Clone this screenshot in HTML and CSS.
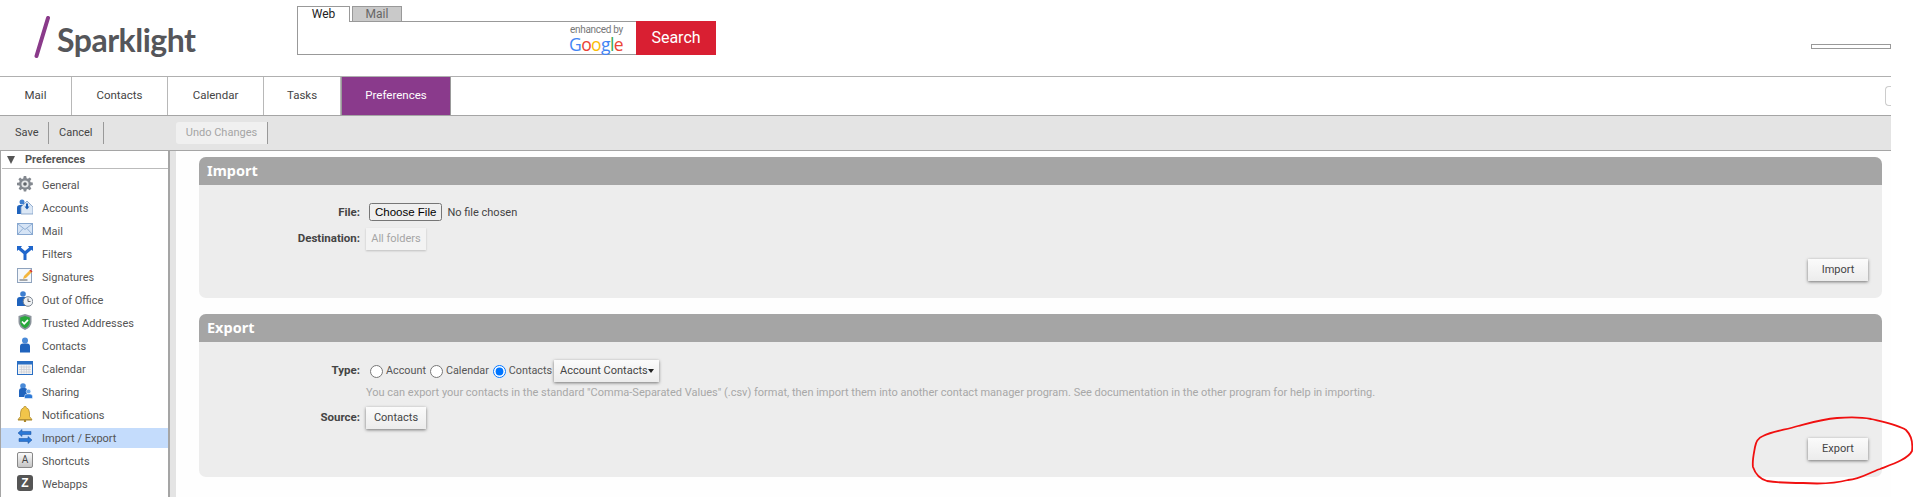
FILE: index.html
```html
<!DOCTYPE html>
<html lang="en">
    <head>
        <meta charset="UTF-8">
        <title>Sparklight Mail - Preferences</title>
        <link rel="stylesheet" href="styles.css">
    </head>
    <body>
        <div class="page">
            <div class="header">
                <div class="logo">
                    <svg class="logo-slash" width="16" height="42" viewBox="0 0 16 42">
                        <path d="M14 2 L2.5 40" stroke="#8a3a8a" stroke-width="4" stroke-linecap="round"/>
                    </svg>
                    <span class="logo-text">Sparklight</span>
                </div>
                <div class="search">
                    <div class="search-tabs">
                        <span class="search-tab on">Web</span>
                        <span class="search-tab">Mail</span>
                    </div>
                    <div class="search-box">
                        <div class="search-field">
                            <div class="enhanced">
                                <span class="enhanced-by">enhanced by</span>
                                <span class="google"><b class="g-blue">G</b><b class="g-red">o</b><b class="g-yellow">o</b><b class="g-blue">g</b><b class="g-green">l</b><b class="g-red">e</b></span>
                            </div>
                        </div>
                        <div class="search-btn">Search</div>
                    </div>
                </div>
                <div class="acct-bar"></div>
            </div>

            <div class="tabs">
                <a class="tab tab-mail">Mail</a>
                <a class="tab tab-contacts">Contacts</a>
                <a class="tab tab-calendar">Calendar</a>
                <a class="tab tab-tasks">Tasks</a>
                <a class="tab tab-prefs">Preferences</a>
                <div class="tab-stub"></div>
            </div>

            <div class="toolbar">
                <a class="tool tool-save">Save</a>
                <a class="tool tool-cancel">Cancel</a>
                <a class="tool tool-undo">Undo Changes</a>
            </div>

            <div class="main">
                <div class="sidebar">
                    <div class="side-head"><span class="side-arrow"></span>Preferences</div>
                    <ul class="side-list">
                        <li>
                            <svg class="ico" viewBox="0 0 16 16"><path d="M6.8 0h2.400l.4 2.200 1.300.5L12.700 1.400l1.700 1.700-1.300 1.800.5 1.300 2.200.4v2.400l-2.200.4-.5 1.300 1.300 1.800-1.700 1.700-1.800-1.300-1.300.5-.4 2.200H6.800l-.4-2.200-1.300-.5-1.800 1.300-1.700-1.700 1.300-1.800-.5-1.300L0 9.200V6.800l2.200-.4.5-1.300-1.300-1.800 1.700-1.700 1.800 1.300 1.300-.5z" fill="#83888f"/><circle cx="8" cy="8" r="3.600" fill="#e6e8ea"/><circle cx="8" cy="8" r="1.800" fill="#5f646a"/></svg>
                            General
                        </li>
                        <li>
                            <svg class="ico" viewBox="0 0 16 16"><circle cx="5" cy="3" r="2.500" fill="#3f7fd0"/><path d="M0 15V8.500Q0 6 3 6h4v9z" fill="#1f63bd"/><path d="M4 8 10 2l6 6v7H4z" fill="#dbe7f5" stroke="#7c9cc4" stroke-width=".8"/><path d="M9 4.500h2v3h1.500L10 10.500 7.500 7.500H9z" fill="#1a5db5"/></svg>
                            Accounts
                        </li>
                        <li>
                            <svg class="ico" viewBox="0 0 16 16"><rect x=".5" y="1.500" width="15" height="11" fill="#d6e4f5" stroke="#88a8d0"/><path d="M1 2l7 5.500L15 2M1 12l5-5.500M15 12l-5-5.500" fill="none" stroke="#88a8d0" stroke-width=".9"/></svg>
                            Mail
                        </li>
                        <li>
                            <svg class="ico" viewBox="0 0 16 16"><path d="M0 1h5L3.800 2.500 8 6l4.200-3.500L11 1h5v5l-1.500-1.300L9.500 9v6h-3V9L1.500 4.700 0 6z" fill="#1f66cc"/></svg>
                            Filters
                        </li>
                        <li>
                            <svg class="ico" viewBox="0 0 16 16"><rect x=".5" y=".5" width="14" height="14" fill="#f4f7fb" stroke="#8fa3bd"/><path d="M2.500 12h8" stroke="#333" stroke-width=".8"/><path d="M6 11l1-3 6-6 2 2-6 6z" fill="#f3b53c"/><path d="M12.500 2.500 13.500 1.500 15.500 3.500 14.500 4.500z" fill="#d8322c"/></svg>
                            Signatures
                        </li>
                        <li>
                            <svg class="ico" viewBox="0 0 16 16"><circle cx="6" cy="3" r="2.800" fill="#3f7fd0"/><path d="M0 15V9q0-3 3-3h6v9z" fill="#1f63bd"/><circle cx="11" cy="10.500" r="4.800" fill="#eef1f4" stroke="#7b8490"/><path d="M11 7.500v3h2.500" fill="none" stroke="#555" stroke-width=".9"/></svg>
                            Out of Office
                        </li>
                        <li>
                            <svg class="ico" viewBox="0 0 16 16"><path d="M8 0l6.500 2v6q0 5-6.500 8Q1.500 13 1.500 8V2z" fill="#8b949c"/><path d="M8 2l4.800 1.400v4.600q0 3.800-4.800 6.200Q3.200 11.800 3.200 8V3.400z" fill="#27a83a"/><path d="M5 7.500l2.200 2.300L11 5.800" fill="none" stroke="#fff" stroke-width="1.700"/></svg>
                            Trusted Addresses
                        </li>
                        <li>
                            <svg class="ico" viewBox="0 0 16 16"><circle cx="8" cy="3.500" r="3" fill="#4a8ad8"/><path d="M3 15.500V9.500Q3 6.500 6 6.500h4q3 0 3 3v6z" fill="#1f63bd"/></svg>
                            Contacts
                        </li>
                        <li>
                            <svg class="ico" viewBox="0 0 16 16"><rect x=".5" y="1.500" width="15" height="13" fill="#f2f2f2" stroke="#2a6fc4"/><rect x="0" y="1" width="16" height="3.500" fill="#2a6fc4"/><path d="M2 7h12M2 9.500h12M2 12h12M4.500 5.500v8M7 5.500v8M9.500 5.500v8M12 5.500v8" stroke="#c8ccd2" stroke-width=".7"/></svg>
                            Calendar
                        </li>
                        <li>
                            <svg class="ico" viewBox="0 0 16 16"><circle cx="6" cy="3" r="2.800" fill="#4a8ad8"/><path d="M2 14V8q0-3 3-3h3q2 0 2 2v7z" fill="#1f63bd"/><circle cx="11.500" cy="8.500" r="2.300" fill="#6aa6e8" stroke="#fff" stroke-width=".5"/><path d="M7.500 15.500v-2q0-2.500 2.500-2.500h3q2.500 0 2.500 2.500v2z" fill="#2b78d6" stroke="#fff" stroke-width=".5"/></svg>
                            Sharing
                        </li>
                        <li>
                            <svg class="ico" viewBox="0 0 16 16"><path d="M8 0q1 0 1 1.400Q12.500 2.500 12.500 7v3.500L15 13.500H1L3.500 10.500V7Q3.500 2.500 7 1.400 7 0 8 0z" fill="#f1c54a" stroke="#a98424" stroke-width=".7"/><path d="M1 13.500h14v1H1z" fill="#a98424"/><circle cx="8" cy="15" r="1.200" fill="#a98424"/></svg>
                            Notifications
                        </li>
                        <li class="on">
                            <svg class="ico" viewBox="0 0 16 16"><path d="M1 4l4-3.500v2h9v3H5v2z" fill="#2b78d6" stroke="#164f9c" stroke-width=".5"/><path d="M15 11l-4 3.500v-2H2v-3h9v-2z" fill="#2b78d6" stroke="#164f9c" stroke-width=".5"/></svg>
                            Import / Export
                        </li>
                        <li>
                            <span class="ico key-ico">A</span>
                            Shortcuts
                        </li>
                        <li>
                            <span class="ico z-ico">Z</span>
                            Webapps
                        </li>
                    </ul>
                </div>

                <div class="content">
                    <div class="panel">
                        <div class="panel-head">Import</div>
                        <div class="panel-body">
                            <div class="row row-file">
                                <label class="row-label">File:</label>
                                <input class="file-input" type="file">
                            </div>
                            <div class="row">
                                <label class="row-label">Destination:</label>
                                <a class="btn btn-off btn-small">All folders</a>
                            </div>
                            <div class="panel-actions"><a class="btn btn-action">Import</a></div>
                        </div>
                    </div>

                    <div class="panel">
                        <div class="panel-head">Export</div>
                        <div class="panel-body">
                            <div class="row">
                                <label class="row-label">Type:</label>
                                <div class="type-opts">
                                    <input class="radio" type="radio" name="type"><span class="opt">Account</span>
                                    <input class="radio" type="radio" name="type"><span class="opt">Calendar</span>
                                    <input class="radio" type="radio" name="type" checked="checked"><span class="opt">Contacts</span>
                                    <a class="btn btn-select">Account Contacts<span class="caret"></span></a>
                                </div>
                            </div>
                            <div class="help">You can export your contacts in the standard "Comma-Separated Values" (.csv) format, then import them into another contact manager program. See documentation in the other program for help in importing.</div>
                            <div class="row">
                                <label class="row-label">Source:</label>
                                <a class="btn btn-small">Contacts</a>
                            </div>
                            <div class="panel-actions"><a class="btn btn-action">Export</a></div>
                        </div>
                    </div>
                </div>
            </div>
        </div>

        <svg class="scribble" width="170" height="80" viewBox="0 0 170 80">
            <path d="M20 19 C30 14 42 13 55 9 C70 5 80 2 94 1 C108 0 118 0 128 2 C140 5 155 8 163 13 C168 18 170 26 169 34 C165 42 150 47 137 52 C125 56 118 62 105 63 C90 67 75 67 60 66 C45 66 30 65 24 64 C17 62 12 56 10 50 C9 44 11 36 12 30 C13 24 15 21 20 19 Z" fill="none" stroke="#f01010" stroke-width="1.800"/>
        </svg>
    </body>
</html>
```

FILE: styles.css
```css
* {
    box-sizing: border-box;
}
html, body {
    margin: 0;
    height: 497px;
    overflow: hidden;
    background-color: #fff;
}
body {
    font-family: Roboto, sans-serif;
    font-size: 11.5px;
    color: #333;
}
.page {
    width: 1891px;
    height: 497px;
    display: flex;
    flex-direction: column;
    overflow: hidden;
}

/* header */
.header {
    height: 76px;
    display: flex;
    flex: none;
}
.logo {
    width: 297px;
    padding: 16px 0 0 34px;
    display: flex;
    align-items: flex-start;
}
.logo-slash {
    flex: none;
}
.logo-text {
    margin: 6px 0 0 7px;
    font-family: Lato, sans-serif;
    font-weight: 700;
    font-size: 32px;
    line-height: 36px;
    letter-spacing: -0.5px;
    color: #55565a;
}
.search {
    width: 419px;
    padding-top: 6px;
}
.search-tabs {
    height: 15px;
    display: flex;
    gap: 2px;
}
.search-tab {
    width: 50px;
    height: 15px;
    border: 1px solid #999;
    border-bottom: none;
    background-color: #c9c9c9;
    color: #666;
    font-size: 12px;
    line-height: 14px;
    text-align: center;
}
.search-tab.on {
    width: 53px;
    height: 16px;
    background-color: #fff;
    color: #222;
    position: relative;
}
.search-box {
    height: 34px;
    display: flex;
    border: 1px solid #999;
    border-right: none;
}
.search-field {
    flex: 1;
    display: flex;
    justify-content: flex-end;
    padding-right: 13px;
}
.enhanced {
    width: 53px;
    display: flex;
    flex-direction: column;
    align-items: flex-end;
}
.enhanced-by {
    margin-top: 2px;
    font-size: 10px;
    line-height: 11px;
    letter-spacing: -0.3px;
    color: #777;
    white-space: nowrap;
}
.google {
    font-family: "Open Sans", sans-serif;
    font-size: 17.5px;
    line-height: 19px;
    letter-spacing: -0.6px;
}
.google b {
    font-weight: 400;
}
.g-blue { color: #4285f4; }
.g-red { color: #ea4335; }
.g-yellow { color: #fbbc05; }
.g-green { color: #34a853; }
.search-btn {
    width: 80px;
    margin: -1px 0;
    background-color: #d91f32;
    color: #fff;
    font-size: 16px;
    line-height: 34px;
    text-align: center;
}
.acct-bar {
    width: 80px;
    height: 5px;
    margin: 44px 0 0 auto;
    border: 1px solid #999;
}

/* main tabs */
.tabs {
    height: 39px;
    flex: none;
    display: flex;
    border-top: 1px solid #b0b0b0;
}
.tab {
    display: block;
    border-right: 1px solid #b8b8b8;
    line-height: 37px;
    text-align: center;
    color: #444;
}
.tab-mail { width: 72px; }
.tab-contacts { width: 96px; }
.tab-calendar { width: 96px; }
.tab-tasks { width: 77px; }
.tab-prefs {
    width: 110px;
    background-color: #8a3a8c;
    border-right: 1px solid #999;
    border-left: 1px solid #999;
    color: #fff;
}
.tab-stub {
    width: 6px;
    height: 20px;
    margin: 9px 0 0 auto;
    border: 1px solid #ccc;
    border-right: none;
    border-radius: 4px 0 0 4px;
}

/* toolbar */
.toolbar {
    height: 36px;
    flex: none;
    padding-top: 6px;
    display: flex;
    align-items: flex-start;
    background-color: #e4e4e4;
    border-top: 1px solid #a5a5a5;
    border-bottom: 1px solid #a5a5a5;
}
.tool {
    height: 22px;
    line-height: 22px;
    border-right: 1px solid #999;
    color: #444;
    font-size: 11px;
}
.tool-save {
    width: 49px;
    padding-left: 15px;
}
.tool-cancel {
    width: 55px;
    padding-left: 10px;
}
.tool-undo {
    width: 92px;
    margin-left: 72px;
    background-color: #f0f0f0;
    border-radius: 3px 0 0 3px;
    color: #a5a5a5;
    text-align: center;
}

/* sidebar */
.main {
    flex: 1;
    display: flex;
    min-height: 0;
    background-color: #e4e4e4;
}
.sidebar {
    width: 170px;
    flex: none;
    margin-top: -1px;
    background-color: #fff;
    border: 1px solid #a5a5a5;
    border-right-width: 2px;
    border-bottom: none;
}
.side-head {
    height: 18px;
    margin: 0 0 0 1px;
    padding-left: 5px;
    display: flex;
    align-items: center;
    border-bottom: 1px solid #bbb;
    color: #555;
    font-weight: 700;
    font-size: 11px;
}
.side-arrow {
    width: 0;
    height: 0;
    margin-right: 10px;
    border-left: 4px solid transparent;
    border-right: 4px solid transparent;
    border-top: 8px solid #555;
}
.side-list {
    list-style: none;
    margin: 0;
    padding: 6px 0 0;
}
.side-list li {
    height: 20px;
    margin-bottom: 3px;
    padding-left: 16px;
    display: flex;
    align-items: center;
    gap: 9px;
    color: #555;
    font-size: 11px;
}
.side-list li.on {
    background-color: #c4dcfc;
}
.ico {
    width: 16px;
    height: 16px;
    flex: none;
    margin-top: -3px;
}
.key-ico {
    background: linear-gradient(#fafafa, #c4c4c4);
    border: 1px solid #888;
    border-radius: 2px;
    color: #444;
    font-size: 10px;
    line-height: 13px;
    text-align: center;
}
.z-ico {
    background-color: #555;
    border-radius: 3px;
    color: #fff;
    font-family: "Liberation Sans", sans-serif;
    font-weight: 700;
    font-size: 12px;
    line-height: 16px;
    text-align: center;
}

/* content */
.content {
    flex: 1;
    margin-left: 6px;
    padding: 6px 9px 0 23px;
    background-color: #fefefe;
    display: flex;
    flex-direction: column;
    gap: 16px;
}
.panel {
    background-color: #ededed;
    border-radius: 7px;
    overflow: hidden;
}
.panel-head {
    height: 28px;
    padding-left: 8px;
    background-color: #a5a5a5;
    color: #fff;
    font-family: "Noto Sans", sans-serif;
    font-weight: 700;
    font-size: 14.5px;
    line-height: 27px;
}
.panel-body {
    padding: 18px 14px 17px 0;
}
.row {
    display: grid;
    grid-template-columns: 161px 1fr;
    column-gap: 6px;
    align-items: start;
}
.row-file {
    height: 18px;
    margin-bottom: 7px;
}
.row-label {
    text-align: right;
    font-weight: 700;
    font-size: 11.5px;
    line-height: 20px;
    color: #444;
}
.row-file .row-label {
    line-height: 18px;
}
.file-input {
    height: 18px;
    margin-left: 3px;
    font-family: Roboto, sans-serif;
    font-size: 11px;
    color: #444;
}
.file-input::file-selector-button {
    font-family: "Liberation Sans", sans-serif;
    font-size: 11.5px;
    height: 18px;
    padding: 0 4px;
    margin-right: 5px;
}
.btn {
    display: inline-block;
    height: 22px;
    line-height: 22px;
    background: linear-gradient(#fbfbfb, #ececec);
    box-shadow: 0 1px 3px rgba(0, 0, 0, .5);
    color: #444;
    font-size: 11px;
    text-align: center;
    white-space: nowrap;
}
.btn-small {
    width: 60px;
}
.btn-off {
    background: #f3f3f3;
    box-shadow: 0 1px 2px rgba(0, 0, 0, .2);
    color: #a5a5a5;
}
.btn-action {
    width: 60px;
}
.panel-actions {
    margin-top: 9px;
    display: flex;
    justify-content: flex-end;
}
.type-opts {
    display: flex;
    align-items: flex-start;
}
.radio {
    width: 13px;
    height: 13px;
    margin: 5px 3px 0 4px;
}
.opt {
    line-height: 22px;
    font-size: 10.8px;
    color: #555;
}
.btn-select {
    width: 105px;
    margin-left: 2px;
    padding: 0 6px;
    display: flex;
    align-items: center;
    justify-content: space-between;
}
.caret {
    width: 0;
    height: 0;
    border-left: 3.5px solid transparent;
    border-right: 3.5px solid transparent;
    border-top: 4px solid #222;
}
.help {
    height: 25px;
    padding-left: 167px;
    color: #a8a8a8;
    font-size: 11px;
    line-height: 22px;
    white-space: nowrap;
}

/* red circle drawn on the screenshot */
.scribble {
    position: absolute;
    left: 1743px;
    top: 417px;
    overflow: visible;
}
```
